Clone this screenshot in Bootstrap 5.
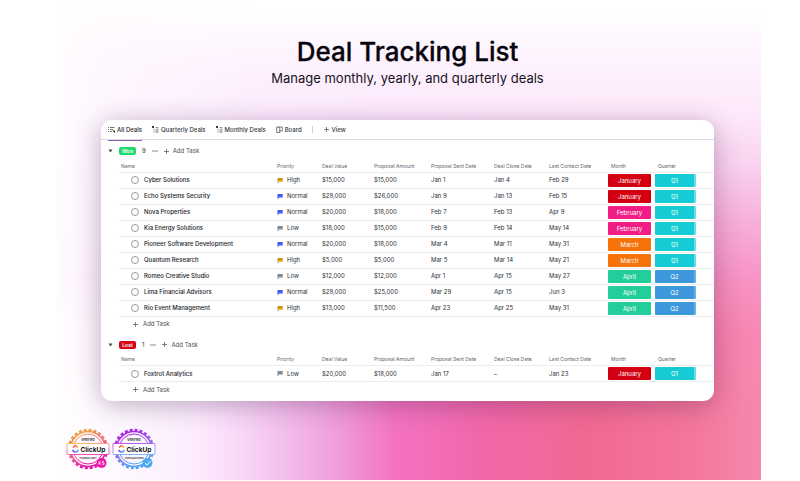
<!DOCTYPE html>
<html lang="en">
<head>
  <meta charset="UTF-8" />
  <meta name="viewport" content="width=device-width, initial-scale=1.0"/>
  <title>Deal Tracking List</title>
  <link href="https://cdn.jsdelivr.net/npm/bootstrap@5.3.0/dist/css/bootstrap.min.css" rel="stylesheet"/>
  <style>
    body {
      font-family: Inter, "Liberation Sans", sans-serif;
      font-size: 6px;
      line-height: 8px;
      color: #2a2e34;
      background: #fff;
    }
    .stage {
      min-height: 100vh;
      margin: 0 39px 0 57px;
      padding: 36px 47px 6px 44px;
      border-bottom: 1px solid #fff;
      background:
        linear-gradient(90deg, rgba(255, 253, 255, 0.95) 0%, rgba(255, 251, 255, 0.6) 8%, rgba(255, 250, 255, 0) 28%),
        linear-gradient(180deg, #fff 2%, #fef2fe 13%, rgba(253, 236, 254, 0.97) 24%, rgba(250, 224, 251, 0.85) 34%, rgba(248, 205, 245, 0.6) 46%, rgba(247, 165, 228, 0.45) 58%, rgba(246, 145, 215, 0.2) 68%, rgba(246, 145, 215, 0) 84%),
        linear-gradient(90deg, #fffcff 0%, #fdf3ff 10%, #fbe5fd 20%, #f6d0f4 28%, #f0a6e0 38%, #f373c2 48%, #f168aa 60%, #f16993 75%, #f4769b 90%, #f788ae 100%);
    }
    .stage h1 {
      font-size: 26px;
      line-height: 32px;
      font-weight: 500;
      color: #08060d;
      -webkit-text-stroke: 0.3px #08060d;
    }
    .subtitle {
      font-size: 13px;
      line-height: 20px;
      color: #15101a;
    }
    .board {
      margin-top: 32px;
      border-radius: 11px;
      background: #fff;
      box-shadow: 0 4px 26px rgba(70, 30, 80, 0.34);
      padding-bottom: 4px;
    }
    .views {
      height: 20px;
      gap: 10px;
      padding-left: 7px;
      border-bottom: 1px solid #dcdade;
    }
    .views a {
      display: flex;
      align-items: center;
      gap: 2px;
      height: 20px;
      color: #33363c;
      font-weight: 500;
      text-decoration: none;
    }
    .views a.active {
      color: #1d1f24;
      box-shadow: 0 1px 0 #8b5fb8;
    }
    .views svg, .flag {
      width: 7px;
      height: 7px;
    }
    .divider {
      width: 1px;
      height: 7px;
      background: #cfcfd4;
    }
    .group + .group { margin-top: 2px; }
    .group-head {
      height: 20px;
      gap: 6px;
      padding: 2px 0 0 7px;
    }
    .plain-btn {
      border: 0;
      padding: 0;
      background: none;
      color: #4a4e55;
      font-weight: 400;
    }
    .caret {
      width: 5px;
      height: 4px;
      display: block;
    }
    .dots {
      width: 6px;
      height: 2px;
      display: block;
    }
    .plus {
      width: 5px;
      height: 5px;
      flex: none;
    }
    .status {
      width: 17px;
      height: 8px;
      border-radius: 2px;
      color: #fff;
      font-size: 5px;
      font-weight: 600;
      text-align: center;
    }
    .won { background: #1fdc6a; }
    .lost { background: #d60012; }
    .deals {
      width: calc(100% - 18px);
      margin-left: 18px;
      table-layout: fixed;
      border-collapse: collapse;
    }
    .deals th, .deals td {
      padding: 0 2px;
      white-space: nowrap;
      border-bottom: 1px solid #ededf0;
    }
    .deals th {
      height: 12px;
      font-size: 5px;
      font-weight: 400;
      color: #5f636b;
    }
    .deals th.pill-head { padding-left: 5px; }
    .deals td { height: 16px; }
    .deals label {
      color: #202329;
      font-weight: 500;
    }
    .deals input {
      appearance: none;
      width: 8px;
      height: 8px;
      margin: 0 5px 0 10px;
      border: 1px solid #96989e;
      border-radius: 50%;
    }
    .deals input:checked { background: #1fdc6a; }
    .flag { margin-right: 3px; }
    .pill {
      height: 13px;
      line-height: 13px;
      border-radius: 1px;
      color: #fff;
      text-align: center;
    }
    .jan { background: #d20010; }
    .feb { background: #f11c86; }
    .mar { background: #f57308; }
    .apr { background: #22ce9a; }
    .q1 { background: #17cbd4; border-right: 2px solid #62dfe4; }
    .q2 { background: #3c98da; border-right: 2px solid #65b0e4; }
    .add-row {
      height: 15px;
      gap: 5px;
      margin-left: 32px;
    }
    .badges {
      gap: 2px;
      margin: 27px 0 0 -35px;
    }
    .badges svg {
      width: 44px;
      height: 42px;
    }
    .c-priority { width: 45px; }
    .c-value { width: 52px; }
    .c-amount { width: 57px; }
    .c-sent { width: 63px; }
    .c-close { width: 55px; }
    .c-contact { width: 59px; }
    .c-month { width: 47px; }
    .c-quarter { width: 45px; }
    .c-end { width: 16px; }
  </style>
</head>
<body>

<main class="stage">
  <header class="text-center">
    <h1 class="mb-0">Deal Tracking List</h1>
    <p class="subtitle mb-0">Manage monthly, yearly, and quarterly deals</p>
  </header>

  <section class="board">
    <nav class="views d-flex align-items-center">
      <a href="#" class="active">
        <svg viewBox="0 0 14 14" fill="none" stroke="#444" stroke-width="1.5"><path d="M0 3h2M4 3h9M0 7h2M4 7h6M0 11h2M4 11h4"/><path d="M10 9l3.500 1v3.500z" fill="#111" stroke="#111" stroke-width="1"/></svg>
        All Deals
      </a>
      <a href="#">
        <svg viewBox="0 0 14 14" fill="none" stroke="#444" stroke-width="1.5"><path d="M7 3.500h6M3 8h2M7 8h6M3 12h2M7 12h6"/><path d="M0 0l3 .5v3.500l-2-1z" fill="#111" stroke="#111"/></svg>
        Quarterly Deals
      </a>
      <a href="#">
        <svg viewBox="0 0 14 14" fill="none" stroke="#444" stroke-width="1.5"><path d="M7 3.500h6M3 8h2M7 8h6M3 12h2M7 12h6"/><path d="M0 0l3 .5v3.500l-2-1z" fill="#111" stroke="#111"/></svg>
        Monthly Deals
      </a>
      <a href="#">
        <svg viewBox="0 0 14 14" fill="none" stroke="#555" stroke-width="1.5"><path d="M1.500 2h11v8h-5v3h-6zM7.500 2v9M4.500 2v2"/></svg>
        Board
      </a>
      <span class="divider"></span>
      <a href="#">
        <svg viewBox="0 0 14 14" stroke="#555" stroke-width="1.500"><path d="M7 2v10M2 7h10"/></svg>
        View
      </a>
    </nav>
    <div id="groups"></div>
  </section>

  <footer class="badges d-flex">
    <svg viewBox="0 0 88 84" role="img" aria-label="Verified ClickUp Consultant">
      <defs>
        <linearGradient id="warm" x1="0" y1="0" x2="0.4" y2="1"><stop offset="0" stop-color="#eeb52a"/><stop offset="0.5" stop-color="#f2707c"/><stop offset="1" stop-color="#e616ac"/></linearGradient>
        <linearGradient id="logoTop" x1="0" x2="1"><stop offset="0" stop-color="#ff2a9a"/><stop offset="1" stop-color="#ffb600"/></linearGradient>
        <linearGradient id="logoBottom" x1="0" x2="1"><stop offset="0" stop-color="#8a34f6"/><stop offset="1" stop-color="#42b8fb"/></linearGradient>
      </defs>
      <circle cx="44" cy="42" r="35" fill="#fff5fd" stroke="url(#warm)" stroke-width="3"/>
      <circle cx="44" cy="42" r="38" fill="none" stroke="url(#warm)" stroke-width="5" stroke-dasharray="6 3.950"/>
      <circle cx="44" cy="42" r="30" fill="none" stroke="url(#warm)" stroke-width="2"/>
      <rect x="2" y="31" width="84" height="22" rx="2" fill="#fff" stroke="url(#warm)" stroke-width="1.500"/>
      <path d="M14 39l5-4 5 4" fill="none" stroke="url(#logoTop)" stroke-width="3"/>
      <path d="M13 44c3 5 9 5 12 0" fill="none" stroke="url(#logoBottom)" stroke-width="3"/>
      <text x="29" y="47" font-size="13" font-weight="700" fill="#151218">ClickUp</text>
      <text x="44" y="25" font-size="6" font-weight="700" text-anchor="middle" fill="#333">VERIFIED</text>
      <text x="44" y="62" font-size="5" font-weight="700" text-anchor="middle" fill="#333">CONSULTANT</text>
      <circle cx="71" cy="70" r="10" fill="#ee1ca8"/>
      <path d="M66 67v6M66 70l4-3M66 70l4 3M76 67h-3v3h3v3h-3" fill="none" stroke="#fff" stroke-width="1.500"/>
    </svg>
    <svg viewBox="0 0 88 84" role="img" aria-label="Verified ClickUp Topographer">
      <defs>
        <linearGradient id="cool" x1="0" y1="0" x2="0.4" y2="1"><stop offset="0" stop-color="#b40ae0"/><stop offset="0.5" stop-color="#9a62ec"/><stop offset="1" stop-color="#55a4f2"/></linearGradient>
      </defs>
      <circle cx="44" cy="42" r="35" fill="#fbf5ff" stroke="url(#cool)" stroke-width="3"/>
      <circle cx="44" cy="42" r="38" fill="none" stroke="url(#cool)" stroke-width="5" stroke-dasharray="6 3.950"/>
      <circle cx="44" cy="42" r="30" fill="none" stroke="url(#cool)" stroke-width="2"/>
      <rect x="2" y="31" width="84" height="22" rx="2" fill="#fff" stroke="url(#cool)" stroke-width="1.500"/>
      <path d="M14 39l5-4 5 4" fill="none" stroke="url(#logoTop)" stroke-width="3"/>
      <path d="M13 44c3 5 9 5 12 0" fill="none" stroke="url(#logoBottom)" stroke-width="3"/>
      <text x="29" y="47" font-size="13" font-weight="700" fill="#151218">ClickUp</text>
      <text x="44" y="25" font-size="6" font-weight="700" text-anchor="middle" fill="#333">VERIFIED</text>
      <text x="44" y="62" font-size="5" font-weight="700" text-anchor="middle" fill="#333">TOPOGRAPHER</text>
      <circle cx="71" cy="70" r="10" fill="#52a9f3"/>
      <path d="M66 70l4 4 7-8" fill="none" stroke="#fff" stroke-width="2"/>
    </svg>
  </footer>
</main>

<script src="https://cdn.jsdelivr.net/npm/bootstrap@5.3.0/dist/js/bootstrap.bundle.min.js"></script>
<script>
  const groups = [
    {
      name: "Won", css: "won", count: 9,
      deals: [
        ["Cyber Solutions", "High", "$15,000", "$15,000", "Jan 1", "Jan 4", "Feb 29", "January", "Q1"],
        ["Echo Systems Security", "Normal", "$28,000", "$26,000", "Jan 9", "Jan 13", "Feb 15", "January", "Q1"],
        ["Nova Properties", "Normal", "$20,000", "$18,000", "Feb 7", "Feb 13", "Apr 9", "February", "Q1"],
        ["Kia Energy Solutions", "Low", "$18,000", "$15,000", "Feb 9", "Feb 14", "May 14", "February", "Q1"],
        ["Pioneer Software Development", "Normal", "$20,000", "$18,000", "Mar 4", "Mar 11", "May 31", "March", "Q1"],
        ["Quantum Research", "High", "$5,000", "$5,000", "Mar 5", "Mar 14", "May 21", "March", "Q1"],
        ["Romeo Creative Studio", "Low", "$12,000", "$12,000", "Apr 1", "Apr 15", "May 27", "April", "Q2"],
        ["Lima Financial Advisors", "Normal", "$28,000", "$25,000", "Mar 29", "Apr 15", "Jun 3", "April", "Q2"],
        ["Rio Event Management", "High", "$13,000", "$11,500", "Apr 23", "Apr 25", "May 31", "April", "Q2"]
      ]
    },
    {
      name: "Lost", css: "lost", count: 1,
      deals: [
        ["Foxtrot Analytics", "Low", "$20,000", "$18,000", "Jan 17", "–", "Jan 23", "January", "Q1"]
      ]
    }
  ];

  const flagColors = { High: "#cf9710", Normal: "#4358f5", Low: "#85888e" };
  const plusIcon = `<svg class="plus" viewBox="0 0 10 10" stroke="#555a61" stroke-width="1.500"><path d="M5 0v10M0 5h10"/></svg>`;

  function dealRow(deal, id) {
    const [name, priority, value, amount, sent, close, contact, month, quarter] = deal;
    return `
      <tr>
        <td><div class="d-flex align-items-center"><input type="checkbox" id="${id}"><label for="${id}">${name}</label></div></td>
        <td><div class="d-flex align-items-center"><svg class="flag" viewBox="0 0 14 14"><path d="M1 2h11l-1 3 1 4H3v3H1z" fill="${flagColors[priority]}"/></svg>${priority}</div></td>
        <td>${value}</td>
        <td>${amount}</td>
        <td>${sent}</td>
        <td>${close}</td>
        <td>${contact}</td>
        <td><div class="pill ${month.slice(0, 3).toLowerCase()}">${month}</div></td>
        <td><div class="pill ${quarter.toLowerCase()}">${quarter}</div></td>
        <td></td>
      </tr>`;
  }

  document.getElementById("groups").innerHTML = groups.map(group => `
    <div class="group">
      <div class="group-head d-flex align-items-center">
        <button class="plain-btn" type="button" aria-label="Collapse ${group.name}"><svg class="caret" viewBox="0 0 10 8"><path d="M1 1h8l-4 6z" fill="#44474d"/></svg></button>
        <span class="status ${group.css}">${group.name}</span>
        <span>${group.count}</span>
        <button class="plain-btn" type="button" aria-label="More"><svg class="dots" viewBox="0 0 12 4" fill="#6b6f77"><circle cx="2" cy="2" r="1.500"/><circle cx="6" cy="2" r="1.500"/><circle cx="10" cy="2" r="1.500"/></svg></button>
        <button class="plain-btn d-flex align-items-center gap-1" type="button">${plusIcon}Add Task</button>
      </div>
      <table class="deals">
        <thead>
          <tr>
            <th>Name</th>
            <th class="c-priority">Priority</th>
            <th class="c-value">Deal Value</th>
            <th class="c-amount">Proposal Amount</th>
            <th class="c-sent">Proposal Sent Date</th>
            <th class="c-close">Deal Close Date</th>
            <th class="c-contact">Last Contact Date</th>
            <th class="c-month pill-head">Month</th>
            <th class="c-quarter pill-head">Quarter</th>
            <th class="c-end"></th>
          </tr>
        </thead>
        <tbody>${group.deals.map((deal, i) => dealRow(deal, group.css + i)).join("")}</tbody>
      </table>
      <button class="plain-btn add-row d-flex align-items-center" type="button">${plusIcon}Add Task</button>
    </div>`).join("");
</script>

</body>
</html>
